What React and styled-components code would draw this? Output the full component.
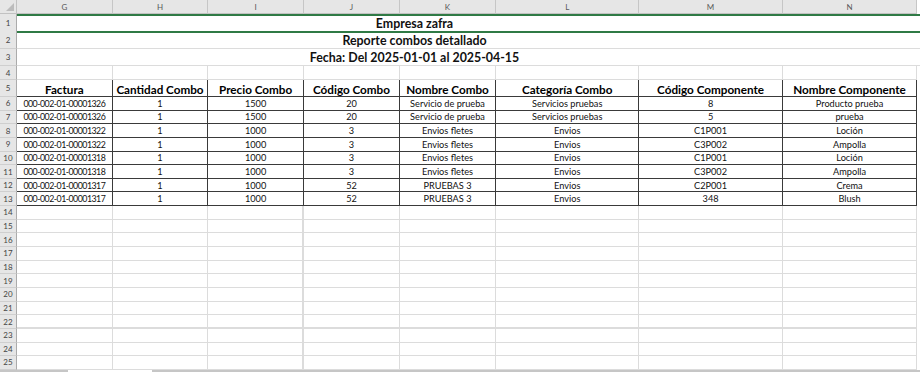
import React from 'react';
import styled, { createGlobalStyle } from 'styled-components';

const GlobalStyle = createGlobalStyle`
  html, body {
    margin: 0;
    padding: 0;
    background: #fff;
  }
  body {
    font-family: Lato, "Liberation Sans", sans-serif;
    overflow: hidden;
  }
`;

const LETTERS = ['G', 'H', 'I', 'J', 'K', 'L', 'M', 'N'];
const WIDTHS = [95.7, 95.6, 95.7, 96, 96, 143.5, 143.2, 134.8];
const TEMPLATE = `17px ${WIDTHS.map(w => `${w}px`).join(' ')} 1fr`;

const HEADERS = [
    'Factura', 'Cantidad Combo', 'Precio Combo', 'Código Combo',
    'Nombre Combo', 'Categoría Combo', 'Código Componente', 'Nombre Componente',
];

const DATA = [
    ['000-002-01-00001326', '1', '1500', '20', 'Servicio de prueba', 'Servicios pruebas', '8', 'Producto prueba'],
    ['000-002-01-00001326', '1', '1500', '20', 'Servicio de prueba', 'Servicios pruebas', '5', 'prueba'],
    ['000-002-01-00001322', '1', '1000', '3', 'Envios fletes', 'Envios', 'C1P001', 'Loción'],
    ['000-002-01-00001322', '1', '1000', '3', 'Envios fletes', 'Envios', 'C3P002', 'Ampolla'],
    ['000-002-01-00001318', '1', '1000', '3', 'Envios fletes', 'Envios', 'C1P001', 'Loción'],
    ['000-002-01-00001318', '1', '1000', '3', 'Envios fletes', 'Envios', 'C3P002', 'Ampolla'],
    ['000-002-01-00001317', '1', '1000', '52', 'PRUEBAS 3', 'Envios', 'C2P001', 'Crema'],
    ['000-002-01-00001317', '1', '1000', '52', 'PRUEBAS 3', 'Envios', '348', 'Blush'],
];

const Sheet = styled.div`
    width: 920px;
    height: 372px;
    display: flex;
    flex-direction: column;
    overflow: hidden;
    background: #fff;
`;

const Row = styled.div`
    display: grid;
    grid-template-columns: ${TEMPLATE};
    height: ${p => p.$h}px;
    flex: none;
`;

const Corner = styled.div`
    position: relative;
    background: #e6e6e6;
    border-right: 1px solid #c2c2c2;
    border-bottom: 1px solid #c2c2c2;

    &::after {
        content: '';
        position: absolute;
        right: 2px;
        bottom: 2px;
        border-style: solid;
        border-width: 0 0 8px 8px;
        border-color: transparent transparent #bcbcbc transparent;
    }
`;

const ColHead = styled.div`
    background: #e6e6e6;
    border-right: 1px solid #c6c6c6;
    border-bottom: 1px solid #c2c2c2;
    color: #595959;
    font-size: 8px;
    display: flex;
    align-items: center;
    justify-content: center;
`;

const RowHead = styled.div`
    background: #e6e6e6;
    border-right: 1px solid #ababab;
    border-bottom: 1px solid #cfcfcf;
    color: #444;
    font-size: 8px;
    display: flex;
    align-items: center;
    justify-content: center;
    box-sizing: border-box;
`;

const Title = styled.div`
    grid-column: 2 / -1;
    box-sizing: border-box;
    display: flex;
    align-items: center;
    justify-content: center;
    padding-right: 108px;
    font-size: 12.4px;
    font-weight: 700;
    color: #111;
    border-top: ${p => (p.$selected ? '2px solid #2f7a45' : 'none')};
    border-bottom: ${p => (p.$selected ? '2px solid #2f7a45' : '1px solid #dcdcdc')};
`;

const Cell = styled.div`
    box-sizing: border-box;
    display: flex;
    align-items: center;
    justify-content: center;
    white-space: nowrap;
    overflow: hidden;
    color: #111;
    font-size: ${p => (p.$head ? '11.7px' : p.$code ? '8.8px' : '9.2px')};
    font-weight: ${p => (p.$head ? 700 : 400)};
    letter-spacing: ${p => (p.$code ? '-0.5px' : 'normal')};
    border-right: ${p => p.$rw || 1}px solid ${p => (p.$dark ? '#3a3a3a' : '#dcdcdc')};
    border-bottom: ${p => p.$bw || 1}px solid ${p => (p.$dark ? '#3a3a3a' : '#dcdcdc')};
    ${p => p.$head && 'color: #000; padding-top: 2px;'}
`;

const Filler = styled.div`
    background: #fff;
`;

const TabStrip = styled.div`
    display: flex;
    height: 2px;
    flex: none;
`;

const TabEdge = styled.div`
    width: ${p => (p.$w ? `${p.$w}px` : 'auto')};
    flex: ${p => (p.$w ? 'none' : '1')};
    background: ${p => (p.$active ? '#fff' : '#c6c6c6')};
`;

function EmptyRow({ n, h, pageBreak }) {
    return (
        <Row $h={h}>
            <RowHead>{n}</RowHead>
            {LETTERS.map((l, i) => (
                <Cell key={l} $rw={i === 2 && n > 13 ? 2 : 1} $bw={pageBreak ? 2 : 1} />
            ))}
            <Filler />
        </Row>
    );
}

export default function App() {
    const DATA_H = 13.65;
    return (
        <Sheet>
            <GlobalStyle />
            <Row $h={14}>
                <Corner />
                {LETTERS.map(l => <ColHead key={l}>{l}</ColHead>)}
                <Filler />
            </Row>

            <Row $h={18}>
                <RowHead>1</RowHead>
                <Title $selected>Empresa zafra</Title>
            </Row>
            <Row $h={17}>
                <RowHead>2</RowHead>
                <Title>Reporte combos detallado</Title>
            </Row>
            <Row $h={17}>
                <RowHead>3</RowHead>
                <Title>Fecha: Del 2025-01-01 al 2025-04-15</Title>
            </Row>

            <EmptyRow n={4} h={14} />

            <Row $h={17}>
                <RowHead>5</RowHead>
                {HEADERS.map(t => <Cell key={t} $head $dark>{t}</Cell>)}
                <Filler />
            </Row>

            {DATA.map((r, i) => (
                <Row key={i} $h={DATA_H}>
                    <RowHead>{i + 6}</RowHead>
                    {r.map((v, j) => <Cell key={j} $dark $code={j === 0}>{v}</Cell>)}
                    <Filler />
                </Row>
            ))}

            {Array.from({ length: 12 }, (_, i) => (
                <EmptyRow key={i} n={i + 14} h={DATA_H} pageBreak={i + 14 === 22} />
            ))}

            <TabStrip>
                <TabEdge $w={68} />
                <TabEdge $w={84} $active />
                <TabEdge />
            </TabStrip>
        </Sheet>
    );
}
